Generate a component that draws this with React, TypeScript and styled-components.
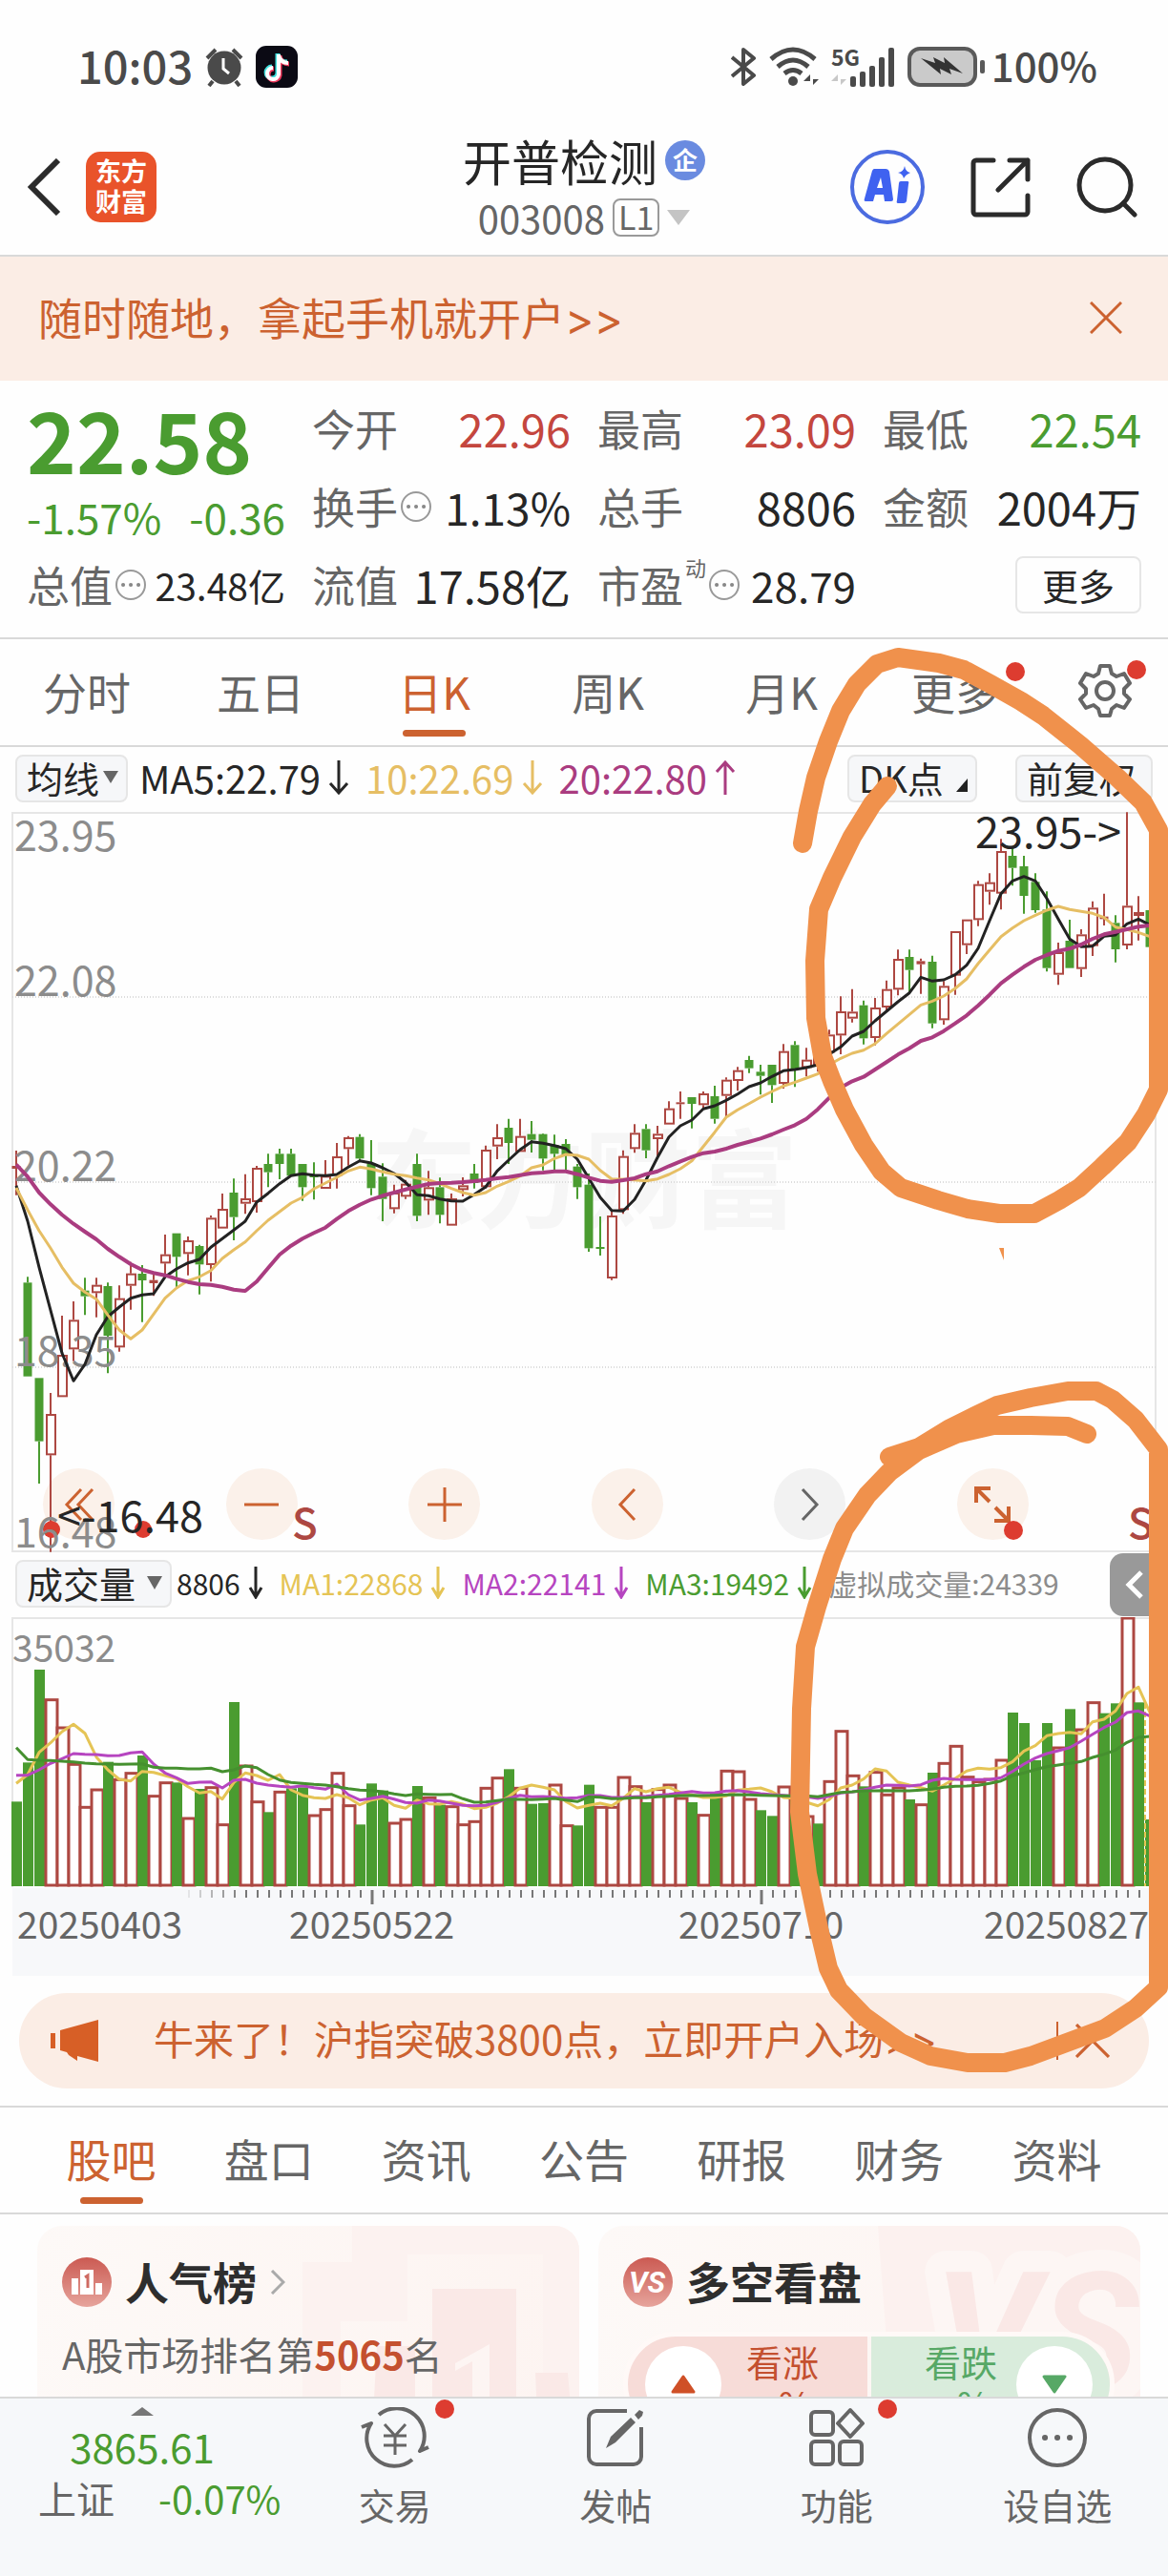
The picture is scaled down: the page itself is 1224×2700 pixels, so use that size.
import React from "react";
import styled, { createGlobalStyle } from "styled-components";

const c = {
  accent: "#cc6230",
  brand: "#e9532a",
  green: "#4a9c30",
  red: "#c4463e",
  candle: "#ad4842",
  dot: "#dd3c30",
  ink: "#262626",
  grey: "#666666",
  mute: "#8c8c8c",
  line: "#d9d9d9",
  grid: "#e6e6e6",
  peach: "#fbede5",
  panel: "#f6f7f9",
  yellow: "#e6be64",
  gold: "#e5c455",
  magenta: "#aa3c80",
  purple: "#b645c0",
  pen: "#f0914c",
};

const GlobalStyle = createGlobalStyle`
  * { box-sizing: border-box; }
  body { margin: 0; background: #fefefe; color: ${c.ink}; font-family: "Noto Sans CJK SC", "Noto Sans", sans-serif; }
  button { font: inherit; color: inherit; background: none; border: 0; padding: 0; margin: 0; }
  svg { display: block; flex: none; }
  h1, h2, p, dl, dt, dd { margin: 0; font-weight: 400; }
`;

const Page = styled.main`
  position: relative;
  overflow: hidden;
`;

/* ---------- status bar ---------- */
const StatusBar = styled.div`
  display: flex;
  align-items: center;
  justify-content: space-between;
  height: 136px;
  padding: 4px 74px 0 81px;
  color: #4a4a4a;
`;
const StatusGroup = styled.div<{ $gap: number }>`
  display: flex;
  align-items: center;
  gap: ${(p) => p.$gap}px;
`;
const StatusText = styled.span<{ $size: number }>`
  padding-bottom: 4px;
  font-size: ${(p) => p.$size}px;
  line-height: 60px;
  font-weight: 500;
`;

/* ---------- header ---------- */
const Header = styled.header`
  display: grid;
  grid-template-columns: 1fr auto 1fr;
  align-items: center;
  height: 133px;
  border-bottom: 2px solid ${c.line};
`;
const HeaderSide = styled.div<{ $end?: boolean }>`
  display: flex;
  align-items: center;
  justify-content: ${(p) => (p.$end ? "flex-end" : "flex-start")};
  gap: ${(p) => (p.$end ? 48 : 26)}px;
  padding: ${(p) => (p.$end ? "0 32px 12px 0" : "0 0 12px 28px")};
`;
const Logo = styled.div`
  display: grid;
  place-content: center;
  width: 74px;
  height: 74px;
  padding-bottom: 2px;
  border-radius: 15px;
  background: ${c.brand};
  color: #fff;
  font-size: 27px;
  line-height: 32px;
  font-weight: 700;
  text-align: center;
`;
const TitleBlock = styled.div`
  display: flex;
  flex-direction: column;
  align-items: center;
  padding-bottom: 7px;
`;
const TitleRow = styled.div`
  display: flex;
  align-items: center;
  gap: 8px;
  height: 60px;
`;
const StockName = styled.h1`
  font-size: 51px;
  line-height: 60px;
`;
const CorpBadge = styled.span`
  width: 42px;
  height: 42px;
  border-radius: 50%;
  background: #6a8be0;
  color: #fff;
  font-size: 26px;
  line-height: 40px;
  text-align: center;
  font-weight: 700;
`;
const StockCode = styled.span`
  font-size: 40px;
  line-height: 60px;
  color: ${c.grey};
`;
const LevelBadge = styled.span`
  height: 40px;
  padding: 0 4px;
  border: 2px solid #999;
  border-radius: 8px;
  font-size: 34px;
  line-height: 34px;
  color: ${c.grey};
`;
const AiButton = styled.button`
  width: 78px;
  height: 80px;
`;

/* ---------- banner ---------- */
const Banner = styled.section`
  display: flex;
  align-items: center;
  justify-content: space-between;
  height: 130px;
  padding: 0 48px 3px 40px;
  background: ${c.peach};
  color: ${c.accent};
`;
const BannerLink = styled.a`
  font-size: 46px;
  line-height: 64px;
  color: inherit;
  text-decoration: none;
`;
const Chevrons = styled.span`
  font-family: Inter, sans-serif;
`;

/* ---------- quote ---------- */
const Quote = styled.section`
  display: grid;
  grid-template-columns: repeat(4, minmax(0, 1fr));
  grid-template-rows: repeat(3, 82px);
  column-gap: 28px;
  padding: 9px 28px 14px;
  border-bottom: 2px solid ${c.line};
`;
const PriceCell = styled.div`
  grid-row: span 2;
  color: ${c.green};
`;
const Price = styled.p`
  font-size: 88px;
  line-height: 102px;
  font-weight: 700;
`;
const Change = styled.p`
  display: flex;
  justify-content: space-between;
  font-size: 44px;
  line-height: 62px;
`;
const Fact = styled.dl`
  display: flex;
  align-items: center;
  justify-content: space-between;
  white-space: nowrap;
`;
const FactLabel = styled.dt`
  display: flex;
  align-items: center;
  gap: 2px;
  font-size: 45px;
  line-height: 60px;
  color: ${c.grey};
`;
const FactValue = styled.dd<{ $color?: string; $size?: number }>`
  font-size: ${(p) => p.$size ?? 47}px;
  line-height: 60px;
  color: ${(p) => p.$color ?? c.ink};
`;
const Super = styled.sup`
  align-self: flex-start;
  font-size: 22px;
  line-height: 22px;
`;
const MoreCell = styled.div`
  display: flex;
  align-items: center;
  justify-content: flex-end;
`;
const MoreButton = styled.button`
  width: 132px;
  height: 60px;
  border: 2px solid ${c.grid};
  border-radius: 8px;
  font-size: 38px;
  line-height: 50px;
`;

/* ---------- tabs ---------- */
const PeriodTabs = styled.nav`
  display: grid;
  grid-template-columns: repeat(6, 1fr) 132px;
  height: 113px;
  border-bottom: 2px solid ${c.line};
`;
const InfoTabs = styled.nav`
  display: grid;
  grid-template-columns: repeat(7, 1fr);
  height: 114px;
  padding: 0 34px;
  border-top: 2px solid ${c.line};
  border-bottom: 2px solid ${c.line};
`;
const Tab = styled.button<{ $active?: boolean; $size: number }>`
  position: relative;
  display: flex;
  align-items: center;
  justify-content: center;
  padding-bottom: 4px;
  font-size: ${(p) => p.$size}px;
  line-height: 60px;
  color: ${(p) => (p.$active ? c.accent : c.grey)};
  &::after {
    content: "";
    display: ${(p) => (p.$active ? "block" : "none")};
    position: absolute;
    bottom: 9px;
    width: 66px;
    height: 7px;
    border-radius: 4px;
    background: ${c.accent};
  }
`;
const IconHolder = styled.span`
  position: relative;
  display: block;
`;
const RedDot = styled.i<{ $top: number; $right: number }>`
  position: absolute;
  top: ${(p) => p.$top}px;
  right: ${(p) => p.$right}px;
  width: 20px;
  height: 20px;
  border-radius: 50%;
  background: ${c.dot};
`;

/* ---------- indicator rows ---------- */
const IndicatorRow = styled.div`
  position: relative;
  display: flex;
  align-items: center;
  height: 68px;
  padding: 0 16px 2px;
  white-space: nowrap;
`;
const Chip = styled.button<{ $width: number }>`
  display: flex;
  align-items: center;
  justify-content: space-between;
  width: ${(p) => p.$width}px;
  height: 50px;
  padding: 0 8px 3px 10px;
  border: 2px solid ${c.grid};
  border-radius: 8px;
  background: ${c.panel};
  font-size: 38px;
  line-height: 43px;
`;
const ChipGroup = styled.div`
  display: flex;
  gap: 40px;
  margin-left: auto;
`;
const Averages = styled.div<{ $size: number; $gap: number; $lead: number }>`
  display: flex;
  gap: ${(p) => p.$gap}px;
  margin-left: ${(p) => p.$lead}px;
  padding-bottom: 3px;
  font-size: ${(p) => p.$size}px;
  line-height: 56px;
`;
const Average = styled.span<{ $color: string }>`
  display: flex;
  align-items: center;
  gap: 8px;
  color: ${(p) => p.$color};
`;
const CollapseButton = styled.button`
  position: absolute;
  top: 1px;
  right: 0;
  display: flex;
  align-items: center;
  width: 61px;
  height: 66px;
  padding-left: 16px;
  border-radius: 14px 0 0 14px;
  background: #999;
`;

/* ---------- charts ---------- */
const ChartBox = styled.div`
  position: relative;
`;
const ChartSvg = styled.svg`
  position: relative;
  width: 100%;
  height: auto;
  pointer-events: none;
`;
const ChartTools = styled.div`
  position: absolute;
  bottom: 13px;
  left: 45px;
  right: 146px;
  display: flex;
  justify-content: space-between;
`;
const RoundButton = styled.button<{ $muted?: boolean }>`
  display: grid;
  place-items: center;
  width: 75px;
  height: 75px;
  border-radius: 50%;
  background: ${(p) => (p.$muted ? "#f2f2f2" : "#fbf1ea")};
  color: ${(p) => (p.$muted ? c.grey : c.accent)};
`;

/* ---------- promo ---------- */
const Promo = styled.section`
  display: flex;
  align-items: center;
  height: 100px;
  margin: 18px 20px;
  padding: 0 41px 0 33px;
  border-radius: 50px;
  background: ${c.peach};
  color: ${c.accent};
`;
const PromoLink = styled.a`
  flex: 1;
  margin-left: 58px;
  padding-bottom: 4px;
  font-size: 42px;
  line-height: 60px;
  color: inherit;
  text-decoration: none;
  white-space: nowrap;
`;
const Divider = styled.i`
  width: 2px;
  height: 40px;
  margin-right: 18px;
  background: ${c.accent};
`;

/* ---------- cards ---------- */
const Cards = styled.section`
  display: grid;
  grid-template-columns: 1fr 1fr;
  gap: 20px;
  height: 191px;
  padding: 12px 29px 0 39px;
  overflow: hidden;
`;
const Card = styled.article`
  position: relative;
  height: 260px;
  padding: 24px 27px 0 26px;
  border-radius: 26px;
  background: linear-gradient(100deg, #fdf9f7, #fdf4f1);
  overflow: hidden;
`;
const CardArt = styled.svg`
  position: absolute;
  top: 0;
  right: 0;
`;
const CardHead = styled.div`
  position: relative;
  display: flex;
  align-items: center;
  gap: 14px;
  height: 70px;
`;
const CardTitle = styled.h2`
  padding-bottom: 4px;
  font-size: 46px;
  line-height: 66px;
  font-weight: 700;
  color: #2e2e2e;
`;
const RankLine = styled.p`
  position: relative;
  margin-top: 10px;
  font-size: 40px;
  line-height: 60px;
  color: ${c.grey};
`;
const RankNumber = styled.b`
  color: #c4502f;
`;
const Vote = styled.div`
  position: relative;
  display: grid;
  grid-template-columns: 1fr 1fr;
  gap: 4px;
  margin-top: 17px;
  height: 110px;
  border: 5px solid #fff9f7;
  border-radius: 55px;
  overflow: hidden;
`;
const VoteSide = styled.button<{ $up?: boolean }>`
  display: flex;
  flex-direction: ${(p) => (p.$up ? "row" : "row-reverse")};
  justify-content: flex-start;
  align-items: center;
  gap: ${(p) => (p.$up ? 26 : 20)}px;
  padding: 0 18px;
  background: ${(p) => (p.$up ? "#f7dcd8" : "#d9ecdc")};
  color: ${(p) => (p.$up ? "#c4502f" : "#57a866")};
`;
const VoteDisc = styled.span`
  display: grid;
  place-items: center;
  width: 80px;
  height: 80px;
  border-radius: 50%;
  background: #fff;
`;
const VoteText = styled.span`
  display: flex;
  flex-direction: column;
  padding-bottom: 4px;
  font-size: 38px;
  line-height: 44px;
`;

/* ---------- bottom bar ---------- */
const BottomBar = styled.nav`
  display: grid;
  grid-template-columns: 298px repeat(4, 1fr);
  height: 188px;
  padding-top: 9px;
  border-top: 2px solid ${c.line};
  background: #f6f8fa;
`;
const IndexCell = styled.button`
  display: flex;
  flex-direction: column;
  align-items: center;
  color: ${c.green};
`;
const IndexValue = styled.span`
  margin-top: 4px;
  font-size: 42px;
  line-height: 55px;
`;
const IndexRow = styled.span`
  display: flex;
  gap: 46px;
  margin-left: 40px;
  align-self: flex-start;
  font-size: 40px;
  line-height: 55px;
`;
const IndexName = styled.span`
  color: ${c.grey};
`;
const NavItem = styled.button`
  display: flex;
  flex-direction: column;
  align-items: center;
  gap: 8px;
  color: ${c.grey};
  font-size: 38px;
  line-height: 60px;
`;

const PenLayer = styled.svg`
  position: absolute;
  top: 0;
  left: 0;
  width: 100%;
  height: auto;
  pointer-events: none;
`;

/* ---------- chart data ---------- */
type Candle = [kind: string, high: number, top: number, bottom: number, low: number];

const shift = (d: number, rows: number[]) => rows.map((v) => v + d);

const springCandles: Candle[] = [
  ["f", 18, 66, 75, 158], ["g", 415, 433, 728, 728], ["g", 733, 733, 932, 1065], ["r", 780, 846, 976, 1280],
  ["r", 537, 660, 793, 793], ["r", 492, 550, 643, 680], ["g", 418, 458, 476, 535], ["r", 418, 440, 466, 542],
  ["g", 433, 444, 600, 718], ["r", 442, 482, 637, 650], ["r", 368, 404, 443, 518], ["g", 378, 405, 426, 557],
  ["f", 405, 425, 435, 475], ["r", 282, 344, 373, 405], ["g", 278, 278, 352, 447], ["r", 288, 300, 343, 410],
  ["g", 314, 318, 376, 470], ["r", 222, 229, 378, 430], ["r", 153, 201, 263, 263], ["g", 106, 150, 227, 300],
  ["r", 92, 168, 185, 217], ["r", 66, 72, 180, 213], ["g", 28, 60, 86, 133], ["g", 12, 28, 60, 108],
  ["g", 12, 28, 97, 97], ["g", 60, 60, 133, 176], ["g", 55, 96, 100, 172], ["r", 48, 97, 138, 138],
  ["r", -6, 36, 97, 137], ["r", -28, -24, 13, 65], ["g", -34, -25, 43, 50], ["g", -15, 58, 136, 158],
  ["g", 58, 100, 170, 240], ["r", 125, 150, 202, 215], ["r", 110, 122, 163, 170], ["g", 28, 60, 223, 240],
  ["r", 82, 133, 175, 220], ["g", 103, 133, 220, 247], ["r", 153, 168, 254, 254], ["r", 102, 127, 142, 162],
  ["g", 60, 90, 120, 137], ["r", 2, 15, 133, 137], ["r", -65, -24, 5, 45], ["g", -82, -54, -6, 60],
  ["r", -82, -28, 22, 22], ["g", -75, -34, -16, 24], ["g", -36, -34, 43, 80], ["g", -32, 0, 28, 87],
  ["g", -18, -3, 30, 87], ["g", 60, 68, 133, 170],
];
const summerCandles: Candle[] = [
  ["g", 1170, 1205, 1405, 1416], ["g", 1305, 1401, 1404, 1428], ["r", 1290, 1302, 1500, 1505], ["r", 1097, 1115, 1285, 1297],
  ["r", 1015, 1042, 1093, 1105], ["g", 1015, 1030, 1097, 1122], ["r", 1020, 1045, 1062, 1115], ["r", 943, 965, 1016, 1016],
  ["f", 912, 946, 950, 998], ["g", 930, 930, 951, 1028], ["r", 912, 918, 955, 963], ["g", 894, 927, 998, 1013],
  ["r", 868, 875, 926, 993], ["r", 835, 845, 879, 910], ["g", 800, 813, 839, 854], ["g", 828, 850, 863, 922],
  ["g", 828, 828, 892, 948], ["r", 763, 785, 888, 903], ["g", 754, 766, 840, 898], ["r", 775, 812, 838, 865],
  ["r", 770, 785, 830, 850], ["r", 718, 733, 790, 800], ["r", 613, 660, 736, 795], ["r", 590, 661, 683, 695],
  ["g", 626, 641, 745, 764], ["r", 618, 648, 744, 767], ["r", 563, 590, 648, 660], ["r", 466, 495, 592, 610],
  ["g", 466, 489, 530, 600], ["f", 494, 502, 512, 605], ["g", 485, 504, 698, 713], ["r", 565, 580, 688, 702],
  ["r", 408, 408, 548, 608], ["r", 371, 371, 452, 480], ["r", 250, 260, 373, 392], ["r", 226, 254, 284, 325],
  ["r", 118, 156, 290, 340], ["g", 145, 171, 209, 265], ["g", 171, 204, 297, 353], ["g", 226, 253, 342, 350],
  ["g", 283, 340, 524, 535], ["r", 444, 474, 545, 577], ["g", 372, 438, 524, 524], ["r", 402, 418, 527, 552],
  ["r", 314, 334, 455, 486], ["f", 290, 362, 370, 390], ["g", 358, 382, 465, 506], ["r", 34, 328, 453, 465],
  ["r", 298, 348, 360, 437], ["g", 300, 342, 458, 458],
];
const candles: Candle[] = [
  ...springCandles.map(([k, h, t, b, l]) => [k, h + 1080, t + 1080, b + 1080, l + 1080] as Candle),
  ...summerCandles,
];

const ma5 = [
  ...shift(1080, [128, 240, 385, 520, 655, 742, 690, 597, 540, 510, 482, 472, 468, 415, 390, 371, 360, 322, 295, 268, 240, 180, 152, 122, 97, 91, 95, 97, 93, 70, 50, 57, 72, 90, 118, 157, 160, 170, 176, 177, 156, 132, 82, 48, 15, -10, -5, 2, 12, 45]),
  1185, 1245, 1286, 1288, 1252, 1190, 1120, 1055, 1020, 1002, 967, 957, 940, 920, 897, 885, 865, 847, 843, 837, 828, 795, 772, 738, 723, 690, 660, 630, 602, 553, 565, 561, 545, 515, 462, 375, 290, 250, 236, 250, 305, 370, 433, 457, 455, 424, 420, 385, 370, 388,
];
const ma10 = [
  ...shift(1080, [135, 205, 270, 325, 385, 435, 463, 485, 535, 582, 610, 582, 532, 482, 450, 427, 415, 395, 357, 330, 305, 270, 237, 210, 183, 165, 138, 120, 102, 82, 70, 76, 85, 92, 97, 104, 110, 122, 137, 150, 158, 150, 130, 115, 98, 72, 63, 43, 30, 33]),
  1125, 1160, 1187, 1188, 1190, 1193, 1187, 1173, 1155, 1130, 1085, 1040, 993, 970, 950, 930, 912, 895, 883, 870, 857, 828, 808, 792, 782, 762, 730, 700, 670, 640, 628, 612, 588, 558, 510, 467, 425, 398, 375, 358, 342, 330, 340, 346, 352, 365, 395, 403, 412, 425,
];
const ma20 = [
  ...shift(1080, [62, 100, 150, 187, 220, 248, 273, 297, 327, 352, 375, 393, 403, 410, 421, 431, 438, 440, 446, 455, 459, 430, 387, 345, 317, 295, 277, 260, 233, 208, 188, 172, 160, 150, 140, 131, 123, 120, 119, 117, 114, 110, 105, 101, 95, 89, 87, 83, 83, 92]),
  1183, 1193, 1196, 1191, 1185, 1172, 1163, 1147, 1132, 1118, 1106, 1101, 1092, 1080, 1070, 1060, 1047, 1032, 1018, 998, 968, 932, 900, 880, 866, 843, 820, 796, 776, 753, 742, 722, 698, 673, 642, 608, 572, 545, 520, 498, 483, 470, 463, 450, 432, 418, 410, 402, 394, 390,
];

const volumes = (
  "g865 g742 g450 r542 r630 r745 r880 r825 g740 r793 r773 g720 r845 r803 g805 r915 g825 r818 r935 g552 " +
  "r750 r863 g898 r832 g823 g820 r906 r887 r773 r875 g937 g808 g830 r930 r918 g816 r850 g875 r878 r935 " +
  "r925 r820 r788 g763 r820 g872 g870 r810 r938 g940 g812 r880 r880 r786 r815 g867 r824 r810 r852 g867 " +
  "r905 g836 r766 r768 r855 g892 g910 r816 g861 r909 g934 r799 r641 r781 g817 r770 r841 r819 g858 r872 " +
  "g774 r742 r688 r785 r800 r792 r732 g585 g618 g735 g618 r693 g574 r636 r551 g587 g556 r285 g553 g921"
).split(" ");
const vol5 = [808, 780, 710, 680, 645, 622, 650, 725, 765, 795, 800, 770, 773, 783, 793, 818, 838, 833, 857, 805, 775, 783, 798, 780, 828, 845, 853, 855, 843, 853, 875, 860, 853, 877, 886, 860, 872, 873, 865, 873, 887, 883, 870, 850, 823, 813, 820, 828, 865, 885, 877, 870, 878, 855, 824, 834, 824, 820, 836, 844, 852, 852, 847, 829, 826, 822, 834, 852, 855, 867, 878, 859, 822, 813, 794, 762, 769, 804, 813, 821, 832, 813, 792, 769, 760, 763, 758, 740, 706, 689, 658, 651, 647, 652, 614, 606, 580, 525, 505, 585];
const vol10 = [782, 782, 765, 745, 730, 714, 716, 717, 721, 720, 712, 709, 747, 775, 790, 808, 804, 803, 822, 798, 795, 807, 813, 817, 820, 815, 821, 826, 810, 843, 860, 855, 848, 857, 868, 870, 860, 863, 870, 877, 878, 877, 867, 855, 845, 850, 849, 851, 854, 853, 846, 846, 852, 852, 850, 848, 845, 842, 838, 833, 838, 837, 832, 830, 835, 840, 843, 845, 848, 850, 855, 848, 838, 835, 828, 820, 813, 814, 816, 812, 798, 792, 795, 796, 796, 796, 790, 770, 747, 728, 714, 705, 695, 675, 653, 632, 615, 585, 580, 596];
const vol20 = [695, 733, 735, 736, 738, 740, 744, 746, 747, 748, 747, 746, 757, 760, 760, 762, 762, 760, 771, 765, 753, 758, 780, 797, 805, 808, 811, 813, 818, 824, 829, 830, 834, 841, 846, 841, 842, 843, 842, 856, 867, 866, 862, 857, 858, 859, 857, 855, 860, 865, 850, 851, 856, 855, 853, 853, 850, 848, 846, 845, 846, 845, 844, 843, 844, 845, 846, 847, 847, 847, 850, 843, 836, 834, 831, 831, 830, 831, 831, 829, 826, 820, 817, 816, 814, 808, 800, 784, 775, 764, 755, 750, 745, 739, 726, 716, 703, 679, 663, 660];

const xAt = (i: number) => 17 + i * 12;
const priceY = (v: number) => (v - 33) / 3;
const volY = (v: number) => (v - 285) / 3;
const track = (rows: number[], y: (v: number) => number) => rows.map((v, i) => `${xAt(i)},${y(v).toFixed(1)}`).join(" ");

function PriceChart() {
  return (
    <ChartSvg viewBox="0 0 1224 776" role="img" aria-label="日K线图">
      <text x="388" y="428" fontSize="112" fontWeight="700" fill="#f6f6f6">东方财富</text>
      <path d="M13 1H1211V775H13Z" fill="none" stroke={c.grid} strokeWidth="2" />
      {[194, 388, 582].map((y) => (
        <line key={y} x1="13" x2="1211" y1={y} y2={y} stroke="#dcdcdc" strokeWidth="2" strokeDasharray="1 2" />
      ))}
      {candles.map(([kind, high, top, bottom, low], i) => {
        const x = xAt(i);
        const color = kind === "g" ? c.green : c.candle;
        const t = priceY(top);
        const h = Math.max(priceY(bottom) - t, 2);
        return (
          <g key={i} stroke={color} strokeWidth="2">
            <line x1={x} x2={x} y1={priceY(high)} y2={t} />
            <line x1={x} x2={x} y1={t + h} y2={priceY(low)} />
            {kind === "r" ? (
              <rect x={x - 4} y={t + 1} width="9" height={Math.max(h - 2, 1)} fill="#fff" />
            ) : (
              <rect x={x - 4.5} y={t} width="9" height={h} fill={color} stroke="none" />
            )}
          </g>
        );
      })}
      <g fill={c.dot}>
        <circle cx="54" cy="752" r="9" />
        <circle cx="150" cy="752" r="9" />
        <circle cx="1062" cy="753" r="10" />
      </g>
      <g fontSize="43" fill={c.mute}>
        <text x="15" y="41">23.95</text>
        <text x="15" y="193">22.08</text>
        <text x="15" y="387">20.22</text>
        <text x="15" y="581">18.35</text>
        <text x="15" y="771">16.48</text>
      </g>
      <g fontSize="45" fill={c.ink}>
        <text x="1022" y="38">23.95-&gt;</text>
        <text x="60" y="755">&lt;-16.48</text>
      </g>
      <g fontSize="44" fontWeight="500" fill={c.candle}>
        <text x="306" y="762">S</text>
        <text x="1182" y="762">S</text>
      </g>
      <g fill="none" strokeWidth="4" strokeLinejoin="round">
        <polyline points={track(ma5, priceY)} stroke="#222" strokeWidth="3" />
        <polyline points={track(ma10, priceY)} stroke={c.yellow} strokeWidth="3" />
        <polyline points={track(ma20, priceY)} stroke={c.magenta} />
      </g>
    </ChartSvg>
  );
}

function VolumeChart() {
  const base = 282;
  return (
    <ChartSvg viewBox="0 0 1224 376" role="img" aria-label="成交量图">
      <rect x="13" y="284" width="1192" height="92" fill="#f7f8fa" />
      <path d="M13 283V1H1211V283" fill="none" stroke={c.grid} strokeWidth="2" />
      {volumes.map((v, i) => {
        const top = volY(Number(v.slice(1)));
        return v[0] === "g" ? (
          <rect key={i} x={xAt(i) - 5} y={top} width="11" height={base - top} fill={c.green} />
        ) : (
          <rect key={i} x={xAt(i) - 5} y={top + 1} width="12" height={base - top - 2} fill="#fff" stroke={c.candle} strokeWidth="3" />
        );
      })}
      <path d="M1200 90V282" stroke={c.gold} strokeWidth="2" strokeDasharray="6 3" />
      <g fill="none" strokeWidth="3" strokeLinejoin="round">
        <polyline points={track(vol5, volY)} stroke={c.gold} />
        <polyline points={track(vol10, volY)} stroke={c.purple} />
        <polyline points={track(vol20, volY)} stroke="#45902f" />
      </g>
      {Array.from({ length: 84 }, (_, k) => (
        <line key={k} x1={198 + k * 12} x2={198 + k * 12} y1="286" y2={k === 16 || k === 50 ? 301 : 294} stroke="#777" strokeWidth={k === 16 || k === 50 ? 3 : 2} opacity={Math.min(1, 0.15 + k * 0.18)} />
      ))}
      <text x="13" y="47" fontSize="39" fill={c.mute}>35032</text>
      <g fontSize="39" fill={c.grey}>
        <text x="18" y="337">20250403</text>
        <text x="303" y="337">20250522</text>
        <text x="711" y="337">20250710</text>
        <text x="1031" y="337">20250827</text>
      </g>
    </ChartSvg>
  );
}

/* ---------- icons ---------- */
const Cross = ({ size = 34 }: { size?: number }) => (
  <svg width={size} height={size} viewBox="0 0 34 34" fill="none" stroke={c.accent} strokeWidth="3">
    <path d="M1 1 33 33M33 1 1 33" />
  </svg>
);
const Arrow = ({ up, w = 22, h = 36 }: { up?: boolean; w?: number; h?: number }) => (
  <svg width={w} height={h} viewBox={`0 0 ${w} ${h}`} fill="none" stroke="currentColor" strokeWidth="3">
    {up ? <path d={`M${w / 2} ${h}V2M2 12 ${w / 2} 2 ${w - 2} 12`} /> : <path d={`M${w / 2} 0V${h - 2}M2 ${h - 12} ${w / 2} ${h - 2} ${w - 2} ${h - 12}`} />}
  </svg>
);
const Caret = ({ w, h, color }: { w: number; h: number; color: string }) => (
  <svg width={w} height={h} viewBox="0 0 10 10" preserveAspectRatio="none"><path d="M0 0H10L5 10Z" fill={color} /></svg>
);
const Ellipsis = () => (
  <svg width="34" height="34" viewBox="0 0 34 34">
    <circle cx="17" cy="17" r="15" fill="none" stroke="#999" strokeWidth="2" />
    <path d="M9 17h.1M17 17h.1M25 17h.1" stroke="#888" strokeWidth="4" strokeLinecap="round" />
  </svg>
);

const Alarm = () => (
  <svg width="42" height="42" viewBox="0 0 42 42" fill="#4a4a4a">
    <circle cx="21" cy="22" r="17.5" />
    <path d="M3 12 12 3M30 3 39 12M9 36 5 41M33 36 37 41" stroke="#4a4a4a" strokeWidth="4" />
    <path d="M20 12V23L26 28" fill="none" stroke="#fff" strokeWidth="3" />
  </svg>
);
const Douyin = () => (
  <svg width="44" height="44" viewBox="0 0 44 44" fill="none" strokeWidth="5">
    <rect width="44" height="44" rx="11" fill="#0b0a14" />
    <path d="M23 8V29A6 6 0 1 1 17 22M23 9Q25 17 33 17" stroke="#3fe0dd" />
    <path d="M25 10V31A6 6 0 1 1 19 24M25 11Q27 19 35 19" stroke="#ef3a5e" />
    <path d="M24 9V30A6 6 0 1 1 18 23M24 10Q26 18 34 18" stroke="#fff" strokeWidth="4" />
  </svg>
);
const Bluetooth = () => (
  <svg width="27" height="42" viewBox="0 0 27 42" fill="none" stroke="#4a4a4a" strokeWidth="4">
    <path d="M1 11 24 30 13 39V3L24 12 1 31" strokeLinejoin="round" />
  </svg>
);
const Wifi = () => (
  <svg width="52" height="42" viewBox="0 0 52 42" fill="none" stroke="#4a4a4a" strokeWidth="5">
    <path d="M2 13Q25-7 48 13M9 21Q25 7 41 21M16 28Q25 21 34 28" />
    <circle cx="25" cy="36" r="5" fill="#4a4a4a" stroke="none" />
    <path d="M43 40V29L36 36H43ZM46 29V40L52 34H46Z" fill="#4a4a4a" stroke="none" />
  </svg>
);
const Signal = () => (
  <svg width="67" height="42" viewBox="0 0 67 42" fill="#4a4a4a">
    <text x="0" y="20" fontSize="23" fontWeight="700">5G</text>
    <path d="M7 40V29L0 36H7ZM10 29V40L16 34H10Z" fill="#c8c8c8" />
    <rect x="20" y="31" width="6" height="11" rx="2" /><rect x="30" y="26" width="6" height="16" rx="2" />
    <rect x="40" y="20" width="6" height="22" rx="2" /><rect x="50" y="11" width="6" height="31" rx="2" /><rect x="60" y="1" width="6" height="41" rx="2" />
  </svg>
);
const Battery = () => (
  <svg width="82" height="42" viewBox="0 0 82 42">
    <rect x="2" y="2" width="69" height="38" rx="11" fill="#cacaca" stroke="#5a5a5a" strokeWidth="4" />
    <rect x="76" y="14" width="5" height="14" rx="2" fill="#5a5a5a" />
    <path d="M14 12 29 17 27 11 39 17 38 11 58 28 44 23 46 29 34 23 35 29Z" fill="#333" />
  </svg>
);

function RankIcon() {
  return (
    <svg width="52" height="52" viewBox="0 0 52 52">
      <defs><linearGradient id="rose" x1="0" y1="0" x2="0" y2="1"><stop stopColor="#cb5a52" /><stop offset="1" stopColor="#e6a49c" /></linearGradient></defs>
      <circle cx="26" cy="26" r="26" fill="url(#rose)" />
      <path d="M10 22H17V39H10ZM19 13H33V39H19ZM35 27H42V39H35Z" fill="#fff" />
      <path d="M24 21 27 19V32" fill="none" stroke="#cf6a62" strokeWidth="3" />
    </svg>
  );
}
function VersusIcon() {
  return (
    <svg width="52" height="52" viewBox="0 0 52 52">
      <circle cx="26" cy="26" r="26" fill="url(#rose)" />
      <text x="25" y="37" textAnchor="middle" fontFamily="Roboto, sans-serif" fontSize="31" fontWeight="700" fontStyle="italic" fill="#fff">VS</text>
    </svg>
  );
}

const infoTabs = ["股吧", "盘口", "资讯", "公告", "研报", "财务", "资料"];

export default function App() {
  return (
    <Page>
      <GlobalStyle />
      <StatusBar>
        <StatusGroup $gap={12}>
          <StatusText $size={47}>10:03</StatusText>
          <Alarm />
          <Douyin />
        </StatusGroup>
        <StatusGroup $gap={13}>
          <Bluetooth />
          <Wifi />
          <Signal />
          <StatusGroup $gap={6}>
            <Battery />
            <StatusText $size={42}>100%</StatusText>
          </StatusGroup>
        </StatusGroup>
      </StatusBar>

      <Header>
        <HeaderSide>
          <button aria-label="返回">
            <svg width="36" height="60" viewBox="0 0 36 60" fill="none" stroke="#2b2b2b" strokeWidth="6"><path d="M33 2 5 30 33 58" /></svg>
          </button>
          <Logo>东方<br />财富</Logo>
        </HeaderSide>
        <TitleBlock>
          <TitleRow>
            <StockName>开普检测</StockName>
            <CorpBadge>企</CorpBadge>
          </TitleRow>
          <TitleRow>
            <StockCode>003008</StockCode>
            <LevelBadge>L1</LevelBadge>
            <Caret w={24} h={16} color="#c4c4c4" />
          </TitleRow>
        </TitleBlock>
        <HeaderSide $end>
          <AiButton aria-label="AI">
            <svg width="78" height="80" viewBox="0 0 78 80">
              <circle cx="39" cy="40" r="37" fill="none" stroke="#4b6be0" strokeWidth="4" />
              <path d="M25 21H37Q40 21 41 24L45 53Q45 55 43 55H36L35 48H26L24 55H16Q14 55 15 52L23 23Q24 21 25 21ZM32 30 28 41H34Z" fill="#3f62f0" fillRule="evenodd" />
              <path d="M53 34H60Q62 34 61 37L59 55Q58 57 56 57H50Q48 57 49 54L51 36Q51 34 53 34Z" fill="#3f62f0" />
              <path d="M57 18Q58 24 63 25Q58 27 56 31Q55 26 50 25Q56 24 57 18Z" fill="#3f62f0" />
            </svg>
          </AiButton>
          <button aria-label="分享">
            <svg width="63" height="64" viewBox="0 0 63 64" fill="none" stroke="#2b2b2b" strokeWidth="5" strokeLinecap="round" strokeLinejoin="round">
              <path d="M24 4H6A3 3 0 0 0 3 7V58A3 3 0 0 0 6 61H57A3 3 0 0 0 60 58V41M41 4H60V24M60 4 29 35" />
            </svg>
          </button>
          <button aria-label="搜索">
            <svg width="64" height="64" viewBox="0 0 64 64" fill="none" stroke="#2b2b2b" strokeWidth="5" strokeLinecap="round">
              <circle cx="30" cy="30" r="27" /><path d="M49 49 61 61" />
            </svg>
          </button>
        </HeaderSide>
      </Header>

      <Banner>
        <BannerLink href="#open">随时随地，拿起手机就开户<Chevrons>&gt;&gt;</Chevrons></BannerLink>
        <button aria-label="关闭"><Cross /></button>
      </Banner>

      <Quote>
        <PriceCell>
          <Price>22.58</Price>
          <Change><span>-1.57%</span><span>-0.36</span></Change>
        </PriceCell>
        <Fact><FactLabel>今开</FactLabel><FactValue $color={c.red}>22.96</FactValue></Fact>
        <Fact><FactLabel>最高</FactLabel><FactValue $color={c.red}>23.09</FactValue></Fact>
        <Fact><FactLabel>最低</FactLabel><FactValue $color={c.green}>22.54</FactValue></Fact>
        <Fact><FactLabel>换手<Ellipsis /></FactLabel><FactValue $size={46}>1.13%</FactValue></Fact>
        <Fact><FactLabel>总手</FactLabel><FactValue>8806</FactValue></Fact>
        <Fact><FactLabel>金额</FactLabel><FactValue>2004万</FactValue></Fact>
        <Fact><FactLabel>总值<Ellipsis /></FactLabel><FactValue $size={39}>23.48亿</FactValue></Fact>
        <Fact><FactLabel>流值</FactLabel><FactValue>17.58亿</FactValue></Fact>
        <Fact><FactLabel>市盈<Super>动</Super><Ellipsis /></FactLabel><FactValue $size={44}>28.79</FactValue></Fact>
        <MoreCell><MoreButton>更多</MoreButton></MoreCell>
      </Quote>

      <PeriodTabs>
        <Tab $size={46}>分时</Tab>
        <Tab $size={46}>五日</Tab>
        <Tab $size={46} $active>日K</Tab>
        <Tab $size={46}>周K</Tab>
        <Tab $size={46}>月K</Tab>
        <Tab $size={46}>更多<RedDot $top={24} $right={18} /></Tab>
        <Tab $size={46} aria-label="设置">
          <svg width="56" height="56" viewBox="0 0 56 56" fill="none" stroke={c.grey} strokeWidth="4" strokeLinejoin="round">
            <path d="M23 2H33L35 10 40 13 48 10 54 20 48 26V31L54 37 48 46 40 43 35 47 33 54H23L21 47 16 43 8 46 2 37 8 31V26L2 20 8 10 16 13 21 10Z" />
            <circle cx="28" cy="28" r="9" />
          </svg>
          <RedDot $top={22} $right={23} />
        </Tab>
      </PeriodTabs>

      <IndicatorRow>
        <Chip $width={118}>均线<Caret w={16} h={13} color="#666" /></Chip>
        <Averages $size={40} $gap={17} $lead={12}>
          <Average $color={c.ink}>MA5:22.79<Arrow /></Average>
          <Average $color={c.yellow}>10:22.69<Arrow /></Average>
          <Average $color={c.magenta}>20:22.80<Arrow up /></Average>
        </Averages>
        <ChipGroup>
          <Chip $width={136}>
            DK点
            <svg width="12" height="30" viewBox="0 0 12 30"><path d="M12 16V30H0Z" fill="#222" /></svg>
          </Chip>
          <Chip $width={144}>前复权</Chip>
        </ChipGroup>
      </IndicatorRow>

      <ChartBox>
        <ChartTools>
          <RoundButton aria-label="最早"><svg width="32" height="36" viewBox="0 0 32 36" fill="none" stroke="currentColor" strokeWidth="3"><path d="M18 2 3 18 18 34M30 2 15 18 30 34" /></svg></RoundButton>
          <RoundButton aria-label="缩小"><svg width="36" height="36" viewBox="0 0 36 36" stroke="currentColor" strokeWidth="3"><path d="M0 18H36" /></svg></RoundButton>
          <RoundButton aria-label="放大"><svg width="36" height="36" viewBox="0 0 36 36" stroke="currentColor" strokeWidth="3"><path d="M0 18H36M18 0V36" /></svg></RoundButton>
          <RoundButton aria-label="左移"><svg width="20" height="36" viewBox="0 0 20 36" fill="none" stroke="currentColor" strokeWidth="3"><path d="M18 2 3 18 18 34" /></svg></RoundButton>
          <RoundButton $muted aria-label="右移"><svg width="20" height="36" viewBox="0 0 20 36" fill="none" stroke="currentColor" strokeWidth="3"><path d="M2 2 17 18 2 34" /></svg></RoundButton>
          <RoundButton aria-label="全屏"><svg width="38" height="38" viewBox="0 0 38 38" fill="none" stroke="currentColor" strokeWidth="4"><path d="M2 17V2H17M2 2 16 16M36 21V36H21M36 36 22 22" /></svg></RoundButton>
        </ChartTools>
        <PriceChart />
      </ChartBox>

      <IndicatorRow>
        <Chip $width={164}>成交量<Caret w={16} h={14} color="#666" /></Chip>
        <Averages $size={30} $gap={17} $lead={5}>
          <Average $color={c.ink}>8806<Arrow w={16} h={34} /></Average>
          <Average $color={c.gold}>MA1:22868<Arrow w={16} h={34} /></Average>
          <Average $color={c.purple}>MA2:22141<Arrow w={16} h={34} /></Average>
          <Average $color={c.green}>MA3:19492<Arrow w={16} h={34} /></Average>
          <Average $color={c.mute}>虚拟成交量:24339</Average>
        </Averages>
        <CollapseButton aria-label="展开">
          <svg width="20" height="30" viewBox="0 0 20 30" fill="none" stroke="#fff" strokeWidth="5"><path d="M17 2 4 15 17 28" /></svg>
        </CollapseButton>
      </IndicatorRow>

      <ChartBox><VolumeChart /></ChartBox>

      <Promo>
        <svg width="50" height="44" viewBox="0 0 50 44" fill="#d75f26"><path d="M0 14H5V30H0ZM10 11 50 0V44L28 38V43L19 37 17 34 10 32Z" /></svg>
        <PromoLink href="#market">牛来了！沪指突破3800点，立即开户入场<Chevrons>&gt;&gt;</Chevrons></PromoLink>
        <Divider />
        <button aria-label="关闭广告"><Cross size={36} /></button>
      </Promo>

      <InfoTabs>
        {infoTabs.map((name, i) => (
          <Tab key={name} $size={47} $active={i === 0}>{name}</Tab>
        ))}
      </InfoTabs>

      <Cards>
        <Card>
          <CardArt width="300" height="200" viewBox="0 0 300 200">
            <path d="M62 0H300V200H262V30H120V100H50V200H10V38H62Z" fill="#fcf2f0" />
            <path d="M146 66H234V200H146ZM88 126H128V200H84ZM254 154H288L292 200H256Z" fill="#fae9e7" />
            <path d="M170 144 206 124V186H188V142L170 152Z" fill="#fdf5f3" />
          </CardArt>
          <CardHead>
            <RankIcon />
            <CardTitle>人气榜</CardTitle>
            <svg width="16" height="26" viewBox="0 0 16 26" fill="none" stroke="#aaa" strokeWidth="3"><path d="M2 1 14 13 2 25" /></svg>
          </CardHead>
          <RankLine>A股市场排名第<RankNumber>5065</RankNumber>名</RankLine>
        </Card>
        <Card>
          <CardArt width="280" height="200" viewBox="0 0 280 200">
            <path d="M5 0H280V200H20Z" fill="#fcf1ef" />
            <text x="64" y="172" fontFamily="Roboto, sans-serif" fontSize="174" fontWeight="700" fontStyle="italic" fill="#fae8e6" stroke="#fdf6f4" strokeWidth="44" strokeLinejoin="round" paintOrder="stroke">VS</text>
          </CardArt>
          <CardHead>
            <VersusIcon />
            <CardTitle>多空看盘</CardTitle>
          </CardHead>
          <Vote>
            <VoteSide $up>
              <VoteDisc><svg width="26" height="20" viewBox="0 0 26 20"><path d="M13 2 24 18H2Z" fill="#cf5027" stroke="#cf5027" strokeWidth="3" strokeLinejoin="round" /></svg></VoteDisc>
              <VoteText><span>看涨</span><span>--%</span></VoteText>
            </VoteSide>
            <VoteSide>
              <VoteDisc><svg width="26" height="20" viewBox="0 0 26 20"><path d="M13 18 24 2H2Z" fill="#57a866" stroke="#57a866" strokeWidth="3" strokeLinejoin="round" /></svg></VoteDisc>
              <VoteText><span>看跌</span><span>--%</span></VoteText>
            </VoteSide>
          </Vote>
        </Card>
      </Cards>

      <BottomBar>
        <IndexCell>
          <svg width="24" height="9" viewBox="0 0 24 9"><path d="M12 0 24 9H0Z" fill="#777" /></svg>
          <IndexValue>3865.61</IndexValue>
          <IndexRow><IndexName>上证</IndexName><span>-0.07%</span></IndexRow>
        </IndexCell>
        <NavItem>
          <IconHolder>
            <svg width="72" height="64" viewBox="0 0 72 64" fill="none" stroke="#666" strokeWidth="4" strokeLinejoin="round">
              <path d="M19 8A29 29 0 0 1 62 46L71 42M54 55A29 29 0 0 1 11 17L1 21" />
              <path d="M25 18 36 30 47 18M36 30V50M24 30H48M24 40H48" strokeWidth="3" />
            </svg>
            <RedDot $top={-8} $right={-26} />
          </IconHolder>
          交易
        </NavItem>
        <NavItem>
          <svg width="60" height="64" viewBox="0 0 60 64" fill="none" stroke="#666" strokeWidth="4">
            <path d="M42 4H10A8 8 0 0 0 2 12V52A8 8 0 0 0 10 60H49A8 8 0 0 0 57 52V21" />
            <path d="M20 43 25 31 46 11 51 16 30 37ZM50 8 55 3 59 5 58 9 54 13Z" fill="#666" stroke="none" />
          </svg>
          发帖
        </NavItem>
        <NavItem>
          <IconHolder>
            <svg width="58" height="64" viewBox="0 0 58 64" fill="none" stroke="#666" strokeWidth="4">
              <rect x="2" y="5" width="23" height="24" rx="4" /><rect x="2" y="36" width="23" height="24" rx="4" /><rect x="32" y="36" width="23" height="24" rx="4" />
              <path d="M43 3 56 17 43 31 30 17Z" strokeLinejoin="round" />
            </svg>
            <RedDot $top={-8} $right={-34} />
          </IconHolder>
          功能
        </NavItem>
        <NavItem>
          <svg width="62" height="64" viewBox="0 0 62 64">
            <circle cx="31" cy="32" r="29" fill="none" stroke="#666" strokeWidth="4" />
            <path d="M18 32h.1M31 32h.1M44 32h.1" stroke="#666" strokeWidth="6" strokeLinecap="round" />
          </svg>
          设自选
        </NavItem>
      </BottomBar>

      <PenLayer viewBox="0 0 1224 2700" fill="none" stroke={c.pen} strokeWidth="20" strokeLinecap="round" strokeLinejoin="round" aria-hidden="true">
        <path d="M841 884 847 850 855 815 868 777 881 745 898 717 919 696 941 689 984 695 1010 702 1038 717 1070 735 1093 750 1132 781 1171 815 1198 841 1214 870V1142L1201 1168 1182 1197 1155 1223 1131 1245 1110 1258 1084 1272H1047L1014 1267 983 1258 944 1245 924 1228 905 1200 885 1163 872 1133 862 1107 855 1067 854 1007 858 953 872 920 893 877 914 843 930 824" />
        <path d="M1139 1503 1119 1495 1080 1494H1041L1002 1503 963 1520 932 1543 909 1567 885 1602 872 1634 856 1684 844 1726 840 1791 838 1899 846 1964 858 2021 868 2063 879 2086 905 2113 944 2141 975 2155 1014 2162H1053L1080 2155 1115 2142 1158 2126 1190 2105 1214 2083V1519L1190 1488 1166 1467 1149 1458H1119L1080 1465 1045 1473 1020 1485 994 1498 963 1517 932 1527" />
        <path d="M1047 1308H1052V1321Z" fill={c.pen} stroke="none" />
      </PenLayer>
    </Page>
  );
}
